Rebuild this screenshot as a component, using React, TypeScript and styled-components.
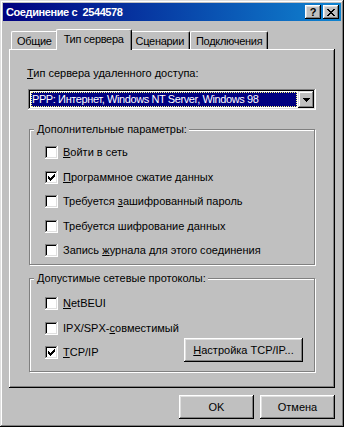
import styled, { createGlobalStyle } from 'styled-components';

const GlobalStyle = createGlobalStyle`
  html, body {
    margin: 0;
    padding: 0;
    background: #c0c0c0;
  }
  body {
    font-family: "Liberation Sans", Arial, sans-serif;
    font-size: 11px;
    color: #000;
  }
`;

const CHECK = ['......#', '.....##', '#...###', '##.###.', '#####..', '.###...', '..#....'];
const CLOSE = ['##....##', '.##..##.', '..####..', '...##...', '..####..', '.##..##.', '##....##'];
const ARROW = ['#######', '.#####.', '..###..', '...#...'];

const pixelPath = (rows: string[]) =>
  rows
    .flatMap((row, y) => [...row].map((c, x) => (c === '#' ? `M${x} ${y}h1v1h-1z` : '')))
    .join('');

const PixelIcon = ({ rows }: { rows: string[] }) => (
  <svg width={rows[0].length} height={rows.length} shapeRendering="crispEdges">
    <path d={pixelPath(rows)} fill="#000" />
  </svg>
);

const CheckItem = ({ checked, children }: { checked?: boolean; children: React.ReactNode }) => (
  <S.CheckRow>
    <S.CheckBox>{checked && <PixelIcon rows={CHECK} />}</S.CheckBox>
    <span>{children}</span>
  </S.CheckRow>
);

const App = () => {
  return (
    <>
      <GlobalStyle />
      <S.Window>
        <S.TitleBar>
          <S.TitleText>Соединение с  2544578</S.TitleText>
          <S.CaptionButton>?</S.CaptionButton>
          <S.CaptionButton $gap={2}>
            <PixelIcon rows={CLOSE} />
          </S.CaptionButton>
        </S.TitleBar>

        <S.Body>
          <S.TabStrip>
            <S.Tab>Общие</S.Tab>
            <S.Tab $active>Тип сервера</S.Tab>
            <S.Tab>Сценарии</S.Tab>
            <S.Tab>Подключения</S.Tab>
          </S.TabStrip>

          <S.Panel>
            <S.FieldLabel>
              <S.Key>Т</S.Key>ип сервера удаленного доступа:
            </S.FieldLabel>
            <S.Combo>
              <S.ComboValue>PPP: Интернет, Windows NT Server, Windows 98</S.ComboValue>
              <S.DropButton>
                <PixelIcon rows={ARROW} />
              </S.DropButton>
            </S.Combo>

            <S.Group $top={19}>
              <S.Legend>Дополнительные параметры:</S.Legend>
              <S.CheckList $padTop={10} $padBottom={7}>
                <CheckItem>
                  <S.Key>В</S.Key>ойти в сеть
                </CheckItem>
                <CheckItem checked>
                  <S.Key>П</S.Key>рограммное сжатие данных
                </CheckItem>
                <CheckItem>
                  Требуется <S.Key>з</S.Key>ашифрованный пароль
                </CheckItem>
                <CheckItem>
                  Требуется шифрование <S.Key>д</S.Key>анных
                </CheckItem>
                <CheckItem>
                  Запись <S.Key>ж</S.Key>урнала для этого соединения
                </CheckItem>
              </S.CheckList>
            </S.Group>

            <S.Group $top={13}>
              <S.Legend>Допустимые сетевые протоколы:</S.Legend>
              <S.CheckList $padTop={12} $padBottom={12}>
                <CheckItem>
                  <S.Key>N</S.Key>etBEUI
                </CheckItem>
                <CheckItem>
                  IPX/SPX-<S.Key>с</S.Key>овместимый
                </CheckItem>
                <S.ProtocolRow>
                  <CheckItem checked>
                    <S.Key>T</S.Key>CP/IP
                  </CheckItem>
                  <S.SetupButton>
                    <S.Key>Н</S.Key>астройка TCP/IP...
                  </S.SetupButton>
                </S.ProtocolRow>
              </S.CheckList>
            </S.Group>
          </S.Panel>

          <S.Footer>
            <S.Button>OK</S.Button>
            <S.Button>Отмена</S.Button>
          </S.Footer>
        </S.Body>
      </S.Window>
    </>
  );
};

export default App;

const raised = `
  box-shadow: inset -1px -1px #000, inset 1px 1px #fff, inset -2px -2px #808080,
    inset 2px 2px #dfdfdf;
`;

const S = {
  Window: styled.div`
    box-sizing: border-box;
    width: 344px;
    height: 427px;
    padding: 3px;
    display: flex;
    flex-direction: column;
    background: #c0c0c0;
    box-shadow: inset -1px -1px #000, inset 1px 1px #dfdfdf, inset -2px -2px #808080,
      inset 2px 2px #fff;
  `,

  TitleBar: styled.div`
    height: 18px;
    display: flex;
    align-items: center;
    padding: 0 2px 0 3px;
    background: linear-gradient(90deg, #000080, #1084d0);
    color: #fff;
    font-weight: bold;
    font-size: 11px;
  `,

  TitleText: styled.div`
    flex: 1;
    white-space: pre;
    line-height: 13px;
    letter-spacing: -0.4px;
  `,

  CaptionButton: styled.div<{ $gap?: number }>`
    width: 16px;
    height: 14px;
    margin-left: ${({ $gap }) => $gap ?? 0}px;
    display: flex;
    align-items: center;
    justify-content: center;
    background: #c0c0c0;
    color: #000;
    font-weight: bold;
    font-size: 11px;
    line-height: 12px;
    ${raised}
  `,

  Body: styled.div`
    flex: 1;
    display: flex;
    flex-direction: column;
    padding: 8px 6px 5px;
  `,

  TabStrip: styled.div`
    height: 20px;
    display: flex;
    align-items: flex-end;
    padding-left: 2px;
  `,

  Tab: styled.div<{ $active?: boolean }>`
    position: relative;
    z-index: ${({ $active }) => ($active ? 1 : 0)};
    box-sizing: border-box;
    height: ${({ $active }) => ($active ? 21 : 18)}px;
    margin: ${({ $active }) => ($active ? '0 -2px -1px' : '0')};
    padding: 3px ${({ $active }) => ($active ? 7 : 5)}px 0;
    line-height: 13px;
    letter-spacing: -0.3px;
    white-space: nowrap;
    background: #c0c0c0;
    border-top: 1px solid #fff;
    border-left: 1px solid #fff;
    border-right: 1px solid #000;
    border-radius: 2px 2px 0 0;
    box-shadow: inset -1px 0 #808080;
  `,

  Panel: styled.div`
    display: flex;
    flex-direction: column;
    align-items: flex-start;
    padding: 18px 18px 16px;
    background: #c0c0c0;
    box-shadow: inset -1px -1px #000, inset 1px 1px #fff, inset -2px -2px #808080;
  `,

  FieldLabel: styled.div`
    line-height: 13px;
  `,

  Key: styled.span`
    text-decoration: underline;
  `,

  Combo: styled.div`
    box-sizing: border-box;
    width: 288px;
    height: 21px;
    margin: 9px 0 0 1px;
    padding: 2px;
    display: flex;
    background: #fff;
    box-shadow: inset -1px -1px #fff, inset 1px 1px #808080, inset -2px -2px #dfdfdf,
      inset 2px 2px #000;
  `,

  ComboValue: styled.div`
    flex: 1;
    margin: 1px;
    border: 1px dotted #ffff80;
    background: #000080;
    color: #fff;
    line-height: 13px;
    letter-spacing: -0.4px;
    white-space: nowrap;
    overflow: hidden;
  `,

  DropButton: styled.div`
    width: 16px;
    height: 17px;
    display: flex;
    align-items: center;
    justify-content: center;
    background: #c0c0c0;
    box-shadow: inset -1px -1px #000, inset 1px 1px #dfdfdf, inset -2px -2px #808080,
      inset 2px 2px #fff;
  `,

  Group: styled.div<{ $top: number }>`
    box-sizing: border-box;
    width: 286px;
    margin: ${({ $top }) => $top}px 0 0 2px;
    display: flex;
    flex-direction: column;
    border: 1px solid #808080;
    box-shadow: inset 1px 1px #fff, 1px 1px #fff;
  `,

  Legend: styled.span`
    align-self: flex-start;
    margin: -7px 0 0 4px;
    padding: 0 2px 0 3px;
    line-height: 13px;
    background: #c0c0c0;
  `,

  CheckList: styled.div<{ $padTop: number; $padBottom: number }>`
    display: flex;
    flex-direction: column;
    gap: 11.5px;
    padding: ${({ $padTop }) => $padTop}px 11px ${({ $padBottom }) => $padBottom}px 15px;
  `,

  CheckRow: styled.label`
    height: 13px;
    display: flex;
    align-items: center;
    gap: 5px;
    line-height: 13px;
    white-space: nowrap;
  `,

  CheckBox: styled.span`
    box-sizing: border-box;
    width: 13px;
    height: 13px;
    padding: 3px;
    display: flex;
    background: #fff;
    box-shadow: inset -1px -1px #fff, inset 1px 1px #808080, inset -2px -2px #dfdfdf,
      inset 2px 2px #000;
  `,

  ProtocolRow: styled.div`
    height: 13px;
    display: flex;
    align-items: flex-start;
    justify-content: space-between;
  `,

  Button: styled.div`
    box-sizing: border-box;
    width: 75px;
    height: 24px;
    display: flex;
    align-items: center;
    justify-content: center;
    background: #c0c0c0;
    line-height: 13px;
    ${raised}
  `,

  SetupButton: styled.div`
    box-sizing: border-box;
    width: 119px;
    height: 24px;
    margin-top: -8px;
    display: flex;
    align-items: center;
    justify-content: center;
    background: #c0c0c0;
    line-height: 13px;
    white-space: nowrap;
    ${raised}
  `,

  Footer: styled.div`
    display: flex;
    justify-content: flex-end;
    gap: 6px;
    margin-top: 7px;
  `,
};
